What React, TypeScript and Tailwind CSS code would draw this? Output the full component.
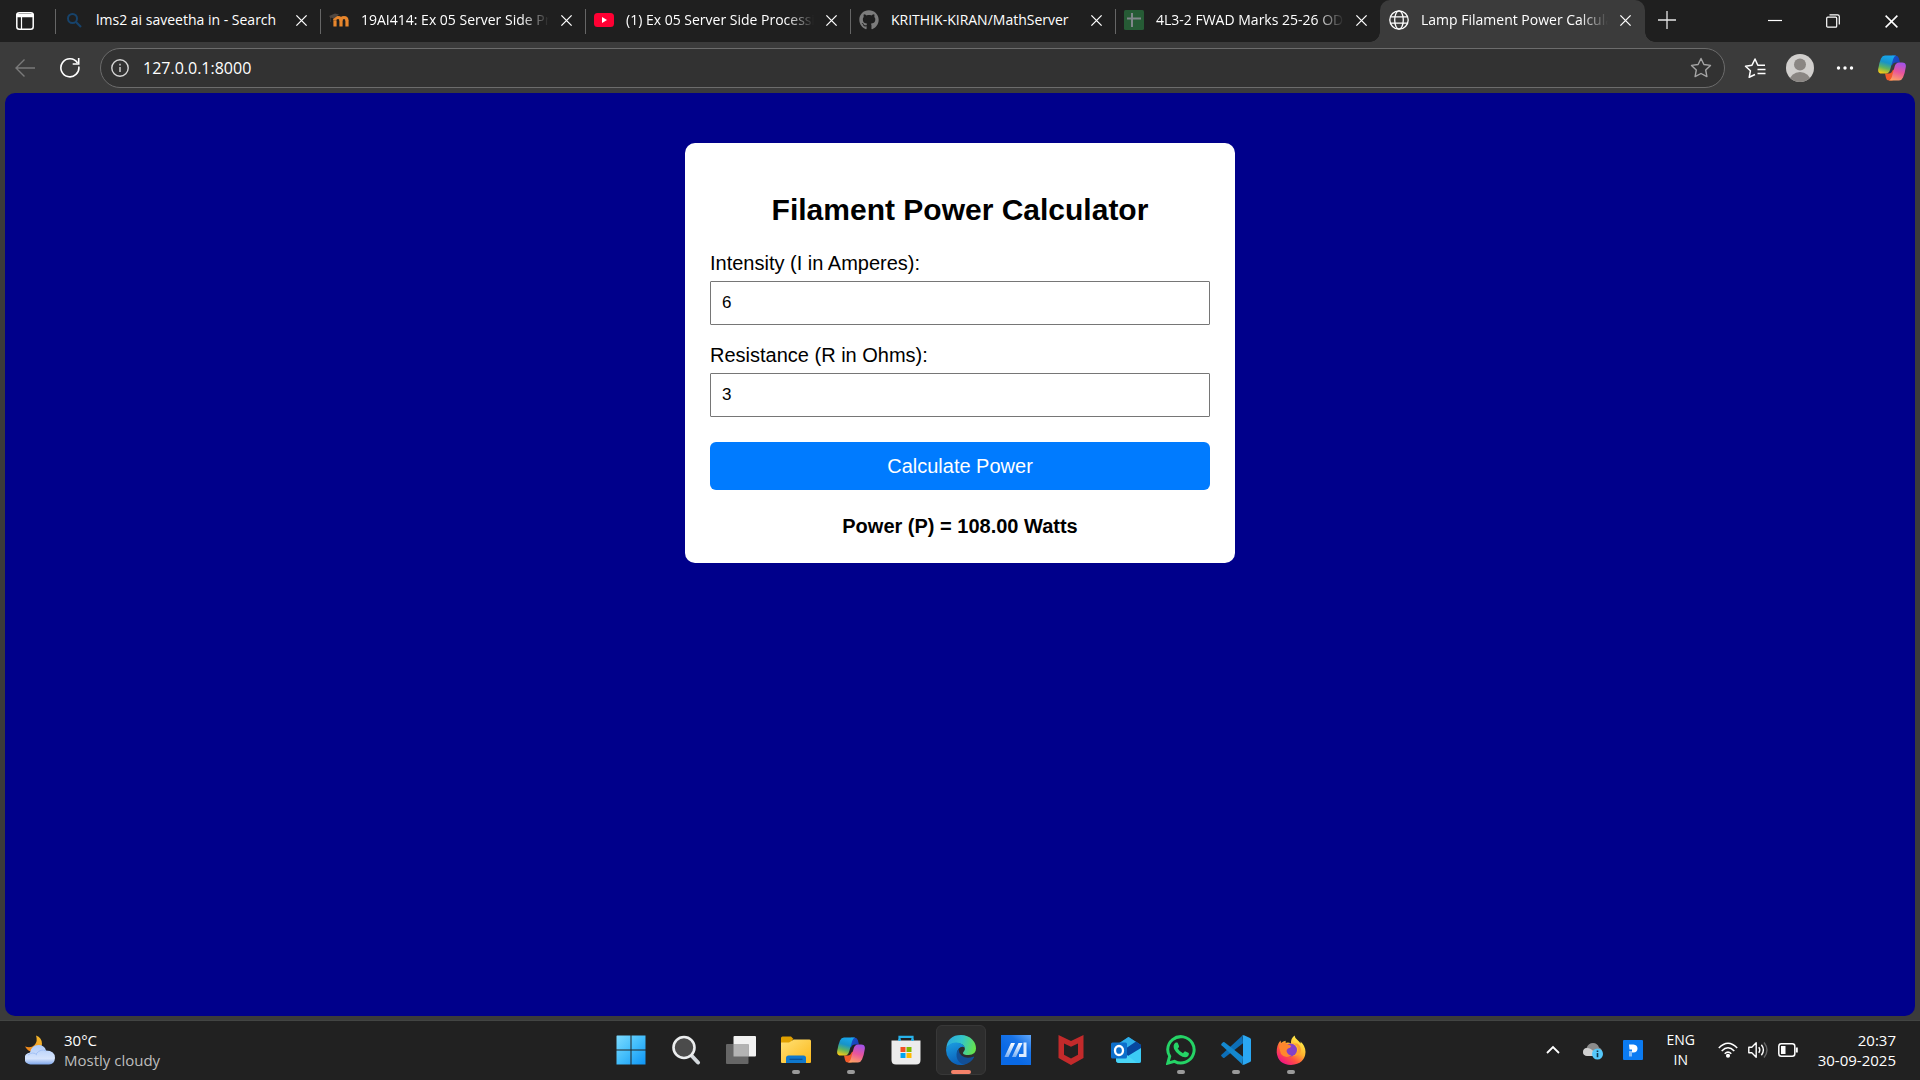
import { useState, type ReactNode } from 'react';
import { FaGithub } from 'react-icons/fa';

function SearchFavicon() {
  return (
    <svg viewBox="0 0 20 20" className="size-5" fill="none" stroke="#17436b" strokeWidth="2">
      <circle cx="8.5" cy="8.5" r="4.5" />
      <path d="M12 12l5 5" strokeWidth="2.2" />
    </svg>
  );
}

function MoodleFavicon() {
  return (
    <svg viewBox="0 0 20 20" className="size-5" fill="none" stroke="#e8862c" strokeWidth="3.2">
      <path d="M6 16.500V10.500M12 16.500V10.500M18 16.500V10.500" />
      <path d="M5.500 10.500Q6 7.500 9 7.500Q12 7.500 12 11Q12 7.500 15 7.500Q18 7.500 18 11" />
      <path d="M0 6L6 3.500L10 4.500L5 8.500Q3 7.500 1.500 8V12H1V7Z" fill="#4f4742" stroke="none" />
    </svg>
  );
}

function YoutubeFavicon() {
  return (
    <svg viewBox="0 0 20 20" className="size-5">
      <rect y="3" width="20" height="14" rx="3.500" fill="#ff0033" />
      <path d="M8 7l5 3-5 3z" fill="#fff" />
    </svg>
  );
}

function SheetFavicon() {
  return (
    <svg viewBox="0 0 20 20" className="size-5">
      <rect width="20" height="20" rx="1.500" fill="#265b35" />
      <path d="M8 3v14M3 8.500h14" stroke="#80868a" strokeWidth="2" />
    </svg>
  );
}

function GlobeIcon() {
  return (
    <svg viewBox="0 0 20 20" className="size-5" fill="none" stroke="#fff" strokeWidth="1.300">
      <circle cx="10" cy="10" r="9.200" />
      <ellipse cx="10" cy="10" rx="4.300" ry="9.200" />
      <path d="M1.500 6.800h17M1.500 13.200h17" />
    </svg>
  );
}

function Cross({ className }: { className: string }) {
  return (
    <svg viewBox="0 0 14 14" className={className} fill="none" stroke="currentColor" strokeWidth="1.400">
      <path d="M1.500 1.500l11 11M12.500 1.500l-11 11" />
    </svg>
  );
}

function CopilotIcon({ id }: { id: string }) {
  return (
    <svg viewBox="0 0 28 26" className="h-[26px] w-7">
      <defs>
        <linearGradient id={`${id}-a`} x1="0.600" y1="0" x2="0.300" y2="1">
          <stop offset="0" stopColor="#18a7ee" />
          <stop offset="0.400" stopColor="#1793c9" />
          <stop offset="0.700" stopColor="#61b45e" />
          <stop offset="1" stopColor="#f5c916" />
        </linearGradient>
        <linearGradient id={`${id}-b`} x1="0.600" y1="0" x2="0.300" y2="1">
          <stop offset="0" stopColor="#a452e6" />
          <stop offset="0.500" stopColor="#e9559b" />
          <stop offset="1" stopColor="#ffa265" />
        </linearGradient>
        <linearGradient id={`${id}-c`} x1="0" y1="0" x2="1" y2="0.500">
          <stop offset="0" stopColor="#1657cc" />
          <stop offset="1" stopColor="#1b3fb8" />
        </linearGradient>
      </defs>
      <path d="M14 .5h3.500q2.500 0 3.300 2.500L22 7.500h-4q-3 0-4 3L12 9z" fill={`url(#${id}-c)`} />
      <path d="M7 18.500h4q2.500 0 3.500-3l3-2-3 12h-3.500q-2.500 0-3-2.500z" fill="#f25a2a" />
      <path d="M7 .5h11q-2 .5-2.800 3.500l-3 10.500q-1.200 4-4.200 4H4q-4.500 0-3.800-4.500Q1 8 3 3.500 4.300.5 7 .5z" fill={`url(#${id}-a)`} />
      <path d="M21 25.500H11q2-.5 2.800-3.500l3-11q1.200-3.500 4.200-3.500h3q4.500 0 3.800 4.500-.8 6-2.800 10.500-1.300 3-4 3z" fill={`url(#${id}-b)`} />
    </svg>
  );
}

function WindowsIcon() {
  return (
    <svg viewBox="0 0 30 30" className="size-[30px]">
      <defs>
        <linearGradient id="win" x1="0" y1="0" x2="30" y2="30" gradientUnits="userSpaceOnUse">
          <stop offset="0" stopColor="#7fdcff" />
          <stop offset="0.500" stopColor="#42bdfb" />
          <stop offset="1" stopColor="#0c93f5" />
        </linearGradient>
      </defs>
      <path d="M1 .5h13.500v14H.5V1zM15.500 .5h14v14h-14zM.5 15.500h14v14H.5zM15.500 15.500h14v14h-14z" fill="url(#win)" />
    </svg>
  );
}

function SearchIcon() {
  return (
    <svg viewBox="0 0 30 30" className="size-[30px]" fill="none">
      <path d="M20 20l7 7.500" stroke="#d3d8dc" strokeWidth="4" strokeLinecap="round" />
      <circle cx="13" cy="12.500" r="10.500" fill="#4b4b4b" stroke="#eceeef" strokeWidth="2.600" />
    </svg>
  );
}

function TaskViewIcon() {
  return (
    <svg viewBox="0 0 30 30" className="size-[30px]">
      <rect x="7.500" y="1" width="22.500" height="20.500" rx="1" fill="#f2f2f2" />
      <rect x="0" y="9" width="22.500" height="20" rx="1" fill="#666" />
      <path d="M7.500 9h15v12.500h-15z" fill="#b3b3b3" />
    </svg>
  );
}

function FolderIcon() {
  return (
    <svg viewBox="0 0 30 30" className="size-[30px]">
      <defs>
        <linearGradient id="folder" x1="0" y1="0" x2="1" y2="1">
          <stop offset="0" stopColor="#ffe176" />
          <stop offset="1" stopColor="#fcb81a" />
        </linearGradient>
      </defs>
      <path d="M0 3q0-1.500 1.500-1.500H10l3 3h-1.500V10H0z" fill="#e0a000" />
      <path d="M0 7.500h8l5-3h15.500Q30 4.500 30 6v21q0 1-1 1H1q-1 0-1-1z" fill="url(#folder)" />
      <path d="M5 28v-5q0-2.500 2.500-2.500h15q2.500 0 2.500 2.500v5z" fill="#0f78cd" />
      <path d="M8.500 24.300h13" stroke="#084f93" strokeWidth="1.200" />
    </svg>
  );
}

function StoreIcon() {
  return (
    <svg viewBox="0 0 30 30" className="size-[30px]">
      <path d="M8.500 7V1.800h13V7" fill="none" stroke="#27b2ea" strokeWidth="2.200" />
      <path d="M.5 5.500h29V25q0 4.500-4.500 4.500H5Q.5 29.500.5 25z" fill="#ececec" />
      <path d="M8.500 6V4M21.500 6V4" stroke="#27b2ea" strokeWidth="2.200" />
      <path d="M9.500 12h5v5h-5z" fill="#f25022" />
      <path d="M15.500 12h5v5h-5z" fill="#7fba00" />
      <path d="M9.500 18h5v5h-5z" fill="#00a4ef" />
      <path d="M15.500 18h5v5h-5z" fill="#ffb900" />
    </svg>
  );
}

function EdgeIcon() {
  return (
    <svg viewBox="0 0 30 30" className="size-[30px]">
      <defs>
        <linearGradient id="edge-top" x1="0" y1="0.300" x2="1" y2="0.500">
          <stop offset="0" stopColor="#2aa9e0" />
          <stop offset="0.500" stopColor="#33c5c9" />
          <stop offset="1" stopColor="#66e34b" />
        </linearGradient>
        <linearGradient id="edge-left" x1="0" y1="0" x2="0.300" y2="1">
          <stop offset="0" stopColor="#1b9fe2" />
          <stop offset="1" stopColor="#0b62bb" />
        </linearGradient>
      </defs>
      <path d="M.2 13.500Q1.500 0 15 0q7 0 11.200 4.500Q30 8.500 30 13.500q0 6.500-7.500 6.500-5.500 0-5.500-2 0-.7 1-1.800 1.200-1.500.8-3.200Q18 8.500 10.500 8 4 8 .2 13.500z" fill="url(#edge-top)" />
      <path d="M.2 13.500Q3.500 7 10.500 7.500q6.500.5 8.300 5-3.300-2-6 1-2.800 3.500-1 8.500 2 5 7 7.500-2 .5-4 .5Q7.500 30 3 24-.5 19.500.2 13.500z" fill="url(#edge-left)" />
      <path d="M12.500 14q-3.500 5-1 10.500 2 4 6.500 5.200 6.500-1.200 10-7.200.5-1.200-.7-.8-7 2.500-11.800-1.200Q12.800 18 12.500 14z" fill="#124f96" />
    </svg>
  );
}

function MyAsusIcon() {
  return (
    <svg viewBox="0 0 30 30" className="size-[30px]">
      <defs>
        <linearGradient id="asus" x1="1" y1="0" x2="0.400" y2="0.700">
          <stop offset="0" stopColor="#62a8fa" />
          <stop offset="0.500" stopColor="#1974e8" />
          <stop offset="1" stopColor="#0969e5" />
        </linearGradient>
        <linearGradient id="asus-mark" x1="0" y1="1" x2="0" y2="0">
          <stop offset="0" stopColor="#79b0f4" />
          <stop offset="1" stopColor="#fff" />
        </linearGradient>
      </defs>
      <path d="M0 0h30v30H0z" fill="url(#asus)" />
      <path d="M3.500 22L10 8h4L7.500 22zM11 22l6.500-14h4L15 22z" fill="url(#asus-mark)" />
      <path d="M22.500 7.500h3V22h-3zM18 19h5v3h-5z" fill="#dcebff" />
    </svg>
  );
}

function McAfeeIcon() {
  return (
    <svg viewBox="0 0 30 30" className="size-[30px]">
      <path d="M2.500 0L15 6 27.500 0v23L15 30 2.500 23zM8 8.500v11.300l7 3.700 7-3.700V8.500l-7 3.200z" fill="#c22a2b" fillRule="evenodd" />
    </svg>
  );
}

function OutlookIcon() {
  return (
    <svg viewBox="0 0 30 30" className="size-[30px]">
      <path d="M5 10L17.500 2 30 10v16q0 2-2 2H8q-3 0-3-3z" fill="#1c98dd" />
      <path d="M9 8l8.500-6L25 7 11 16z" fill="#2eaee9" />
      <path d="M14 14l11-7.500 5 3.500v4L16 22z" fill="#07479f" />
      <path d="M30 13v13q0 2-2 2H8l4-4z" fill="#3ccbf5" />
      <path d="M5 23l11-3 10 8H8q-3 0-3-3z" fill="#4ad5f5" />
      <rect y="7.500" width="16" height="16" rx="1.500" fill="#0c6fcc" />
      <ellipse cx="8" cy="15.500" rx="4" ry="4.500" fill="none" stroke="#fff" strokeWidth="2.300" />
    </svg>
  );
}

function WhatsAppIcon() {
  return (
    <svg viewBox="0 0 30 30" className="size-[30px]" fill="none">
      <path d="M1.800 28.200l1.900-7Q1.700 18 1.700 14.500A13.200 13.200 0 1 1 8.500 26.400z" stroke="#25d366" strokeWidth="3" />
      <path d="M9.300 7.800q.8-.5 1.800-.2.600.2.900 1l1 2.500q.2.700-.3 1.300l-1 1.200q1.900 3.400 5.300 4.700l1.300-1.600q.5-.6 1.200-.3l2.800 1.400q.7.400.6 1.200-.3 2.800-3.500 3.300-2.400.2-6-2.200-3.600-2.700-5.300-6.200-1.400-3.800 1.200-6.100z" fill="#25d366" />
    </svg>
  );
}

function VsCodeIcon() {
  return (
    <svg viewBox="0 0 30 30" className="size-[30px]">
      <path d="M22 8.300L3.500 22.800q-.8.600-1.500 0L.5 21.300q-.7-.8 0-1.500L21.500.5z" fill="#0d6fb8" />
      <path d="M22 21.700L3.500 7.200q-.8-.6-1.500 0L.5 8.700q-.7.800 0 1.500l21 19.300z" fill="#1488cf" />
      <path d="M22 .3q.5-.3 1 0L29 3q1 .5 1 1.500v21q0 1-1 1.500l-6 2.700q-1.200.5-2-.7 1 .5 1-1V2Q22 .8 21 1z" fill="#2aa7f2" />
    </svg>
  );
}

function FirefoxIcon() {
  return (
    <svg viewBox="0 0 30 30" className="size-[30px]">
      <defs>
        <linearGradient id="fox" x1="0.800" y1="0.100" x2="0.200" y2="0.900">
          <stop offset="0" stopColor="#fff14a" />
          <stop offset="0.400" stopColor="#ffb02e" />
          <stop offset="0.700" stopColor="#ff5340" />
          <stop offset="1" stopColor="#f0197e" />
        </linearGradient>
      </defs>
      <path d="M18.500.5q.5 3 3 4.500 2 1.500 3 3.500.3-1 0-2 5 4.500 5 10.500Q29 29 15 30 2 29.500.7 17.500.5 10 4.500 5.500L5 8q2-2 5-2.300-1 1.500-.5 2.300 3-1 5.500.5-.5-5 3.500-8z" fill="url(#fox)" />
      <circle cx="14.500" cy="15" r="6.500" fill="#8441c7" />
      <path d="M3 12q2-5 7-4.500 0 1.500 3.500 2.500 2 .5 1.500 1.500-.5 1.300-3 2-1.500 1-1.500 2.500 1 4 5 4.500Q9 24 5 19z" fill="#ff872d" />
      <path d="M16 8.500q6 1 6 7-1 4.500-5.500 5 5 1 8-3 1.500-6-3-9z" fill="#ffa12e" />
    </svg>
  );
}

function WeatherIcon() {
  return (
    <svg viewBox="0 0 30 30" className="size-[30px]">
      <defs>
        <linearGradient id="moon" x1="1" y1="0" x2="0" y2="1">
          <stop offset="0" stopColor="#f5c02e" />
          <stop offset="1" stopColor="#ef7d18" />
        </linearGradient>
        <linearGradient id="cloud" x1="0" y1="0" x2="0" y2="1">
          <stop offset="0" stopColor="#aecbf9" />
          <stop offset="0.700" stopColor="#d6e4fc" />
          <stop offset="1" stopColor="#7ea6ea" />
        </linearGradient>
      </defs>
      <path d="M11 .5q6 2 6 8.500-1 8-9 8-5-.5-8-5.500 6 2 9.500-1.500T11 .5z" fill="url(#moon)" />
      <path d="M6 29.500a6 6 0 0 1-1-12q1.500-7.500 8.500-7.500 6 0 7.500 5.500 9 0 9 7.500-.5 6-6 6.500z" fill="url(#cloud)" />
      <path d="M3 20q5-4 9 0M11 19q5-6 10-3" stroke="#a3c1f5" strokeWidth="1" fill="none" />
    </svg>
  );
}

type TabInfo = { title: string; icon: ReactNode; fade?: boolean };

const tabs: TabInfo[] = [
  { title: 'lms2 ai saveetha in - Search', icon: <SearchFavicon /> },
  { title: '19AI414: Ex 05 Server Side Processing', icon: <MoodleFavicon />, fade: true },
  { title: '(1) Ex 05 Server Side Processing', icon: <YoutubeFavicon />, fade: true },
  { title: 'KRITHIK-KIRAN/MathServer', icon: <FaGithub className="size-5 text-[#7c7c7c]" /> },
  { title: '4L3-2 FWAD Marks 25-26 ODD', icon: <SheetFavicon />, fade: true },
];

function TabBody({ title, icon, fade }: TabInfo) {
  return (
    <>
      <button className="flex min-w-0 flex-1 items-center gap-3 text-left">
        <span className="shrink-0">{icon}</span>
        <span
          className={`min-w-0 flex-1 overflow-hidden whitespace-nowrap text-sm text-white ${
            fade ? '[mask-image:linear-gradient(to_right,#000_calc(100%-28px),transparent)]' : ''
          }`}
        >
          {title}
        </span>
      </button>
      <button aria-label={`Close ${title}`} className="flex size-6 items-center justify-center text-white">
        <Cross className="size-[13px]" />
      </button>
    </>
  );
}

function TabStrip() {
  return (
    <header className="flex h-[42px] items-stretch bg-[#1f1f1f]">
      <button aria-label="Tab actions" className="flex w-[55px] shrink-0 items-center pl-4">
        <svg viewBox="0 0 18 18" className="size-[18px]" fill="none" stroke="#fff" strokeWidth="1.500">
          <rect x="0.800" y="0.800" width="16.400" height="16.400" rx="2.500" />
          <path d="M1 2.500h16v2H1z" fill="#fff" />
          <path d="M5.500 5v12" strokeWidth="1.200" />
        </svg>
      </button>
      <nav aria-label="Tabs" className="flex min-w-0">
        {tabs.map((tab) => (
          <div key={tab.title} className="flex w-[265px] min-w-0 items-center pb-[2px]">
            <div className="mt-[2px] h-[25px] w-px shrink-0 bg-[#666]" />
            <div className="flex min-w-0 flex-1 items-center gap-[5px] pl-2 pr-[7px]">
              <TabBody {...tab} />
            </div>
          </div>
        ))}
        <div className="relative flex w-[265px] min-w-0 items-center gap-[5px] rounded-t-[10px] bg-[#3b3b3b] pb-[2px] pl-[9px] pr-[8px]">
          <span className="absolute bottom-0 right-full size-[10px] bg-[radial-gradient(circle_at_0_0,#1f1f1f_9.5px,#3b3b3b_10px)]" />
          <TabBody title="Lamp Filament Power Calculator" icon={<GlobeIcon />} fade />
          <span className="absolute bottom-0 left-full size-[10px] bg-[radial-gradient(circle_at_100%_0,#1f1f1f_9.5px,#3b3b3b_10px)]" />
        </div>
      </nav>
      <button aria-label="New tab" className="flex w-11 shrink-0 items-center justify-center pb-[2px]">
        <svg viewBox="0 0 18 18" className="size-[18px]" stroke="#e6e6e6" strokeWidth="1.300">
          <path d="M9 0v18M0 9h18" />
        </svg>
      </button>
      <div className="ml-auto flex shrink-0 text-white">
        <button aria-label="Minimize" className="flex w-[58px] items-center justify-center">
          <svg viewBox="0 0 14 14" className="size-[14px]" stroke="currentColor" strokeWidth="1.200">
            <path d="M0 6.500h14" />
          </svg>
        </button>
        <button aria-label="Restore" className="flex w-[58px] items-center justify-center">
          <svg viewBox="0 0 14 14" className="size-[14px]" fill="none" stroke="currentColor" strokeWidth="1.200">
            <rect x="0.700" y="3.200" width="10" height="10" rx="1" />
            <path d="M3.500 .8h8q1.800 0 1.800 1.800v8" />
          </svg>
        </button>
        <button aria-label="Close window" className="flex w-[58px] items-center justify-center">
          <Cross className="size-[15px]" />
        </button>
      </div>
    </header>
  );
}

function Toolbar() {
  return (
    <div className="flex h-[51px] items-center bg-[#3b3b3b] pr-[14px]">
      <button aria-label="Back" className="flex w-[50px] items-center justify-center">
        <svg viewBox="0 0 20 20" className="size-5" fill="none" stroke="#7a7a7a" strokeWidth="1.400">
          <path d="M20 10H1M9.500 1.500L1 10l8.500 8.500" />
        </svg>
      </button>
      <button aria-label="Refresh" className="flex w-10 items-center justify-center">
        <svg viewBox="0 0 20 20" className="size-5" fill="none" stroke="#fff" strokeWidth="1.600">
          <path d="M18.800 8.500A9 9 0 1 1 17.500 5" />
          <path d="M18.700 0v6h-6" />
        </svg>
      </button>
      <div className="ml-[10px] flex h-10 flex-1 items-center rounded-full border border-[#6c6c6c] bg-[#323232] pl-[10px] pr-3">
        <button aria-label="Site information">
          <svg viewBox="0 0 18 18" className="size-[18px]" fill="none" stroke="#d6d6d6" strokeWidth="1.400">
            <circle cx="9" cy="9" r="8.200" />
            <path d="M9 8v5M9 4.800v1.600" />
          </svg>
        </button>
        <input
          aria-label="Address"
          defaultValue="127.0.0.1:8000"
          className="ml-[14px] min-w-0 flex-1 bg-transparent text-base text-white outline-none"
        />
        <button aria-label="Add to favorites">
          <svg viewBox="0 0 22 22" className="size-[22px]" fill="none" stroke="#a5a5a5" strokeWidth="1.400" strokeLinejoin="round">
            <path d="M11 1.500l2.900 6 6.600.9-4.800 4.600 1.200 6.600L11 16.500l-5.900 3.100L6.300 13 1.500 8.400l6.600-.9z" />
          </svg>
        </button>
      </div>
      <div className="ml-[7px] flex items-center">
        <button aria-label="Favorites" className="flex w-[45px] items-center justify-center">
          <svg viewBox="0 0 22 22" className="size-[22px]" fill="none" stroke="#fff" strokeWidth="1.500" strokeLinejoin="round">
            <path d="M11 17.500l-5.800 2.800 1.200-6.500L1.500 9.200l6.500-1 3-6.200 2.800 6.200H21" />
            <path d="M13.500 12.500H21.500M13.500 16.500H21.500" />
          </svg>
        </button>
        <button aria-label="Profile" className="flex w-[45px] items-center justify-center">
          <svg viewBox="0 0 28 28" className="size-7">
            <clipPath id="avatar">
              <circle cx="14" cy="14" r="14" />
            </clipPath>
            <g clipPath="url(#avatar)">
              <path d="M0 0h28v28H0z" fill="#d1cfcd" />
              <circle cx="14" cy="10.500" r="6" fill="#8a8683" />
              <ellipse cx="14" cy="27" rx="10.500" ry="9" fill="#8a8683" />
            </g>
          </svg>
        </button>
        <button aria-label="Settings and more" className="flex w-[45px] items-center justify-center">
          <svg viewBox="0 0 18 18" className="size-[18px]" fill="#fff">
            <circle cx="2.500" cy="9" r="1.700" />
            <circle cx="9" cy="9" r="1.700" />
            <circle cx="15.500" cy="9" r="1.700" />
          </svg>
        </button>
        <button aria-label="Copilot" className="ml-[11px]">
          <CopilotIcon id="bar" />
        </button>
      </div>
    </div>
  );
}

function Calculator() {
  const [intensity, setIntensity] = useState('6');
  const [resistance, setResistance] = useState('3');
  const [power, setPower] = useState(108);
  const fieldClass =
    'mt-[6px] block h-11 w-full rounded-[1px] border border-[#767676] bg-white px-[11px] text-[17px] text-black outline-none';
  return (
    <form
      className="mx-auto mt-[50px] w-[550px] rounded-[10px] bg-white px-[25px] pb-[25px] pt-[49px] font-['Liberation_Sans',Arial,sans-serif] text-xl leading-6 text-black"
      onSubmit={(event) => {
        event.preventDefault();
        setPower(Number(intensity) ** 2 * Number(resistance));
      }}
    >
      <h2 className="text-center text-3xl font-bold">Filament Power Calculator</h2>
      <label htmlFor="intensity" className="mt-[23px] block">
        Intensity (I in Amperes):
      </label>
      <input id="intensity" value={intensity} onChange={(e) => setIntensity(e.target.value)} className={fieldClass} />
      <label htmlFor="resistance" className="mt-[18px] block">
        Resistance (R in Ohms):
      </label>
      <input id="resistance" value={resistance} onChange={(e) => setResistance(e.target.value)} className={fieldClass} />
      <button type="submit" className="mt-[25px] block h-12 w-full rounded-md bg-[#007bff] text-white">
        Calculate Power
      </button>
      <p className="mt-6 text-center font-bold">Power (P) = {power.toFixed(2)} Watts</p>
    </form>
  );
}

type TaskApp = { name: string; icon: ReactNode; state?: 'open' | 'active' };

const apps: TaskApp[] = [
  { name: 'Start', icon: <WindowsIcon /> },
  { name: 'Search', icon: <SearchIcon /> },
  { name: 'Task View', icon: <TaskViewIcon /> },
  { name: 'File Explorer', icon: <FolderIcon />, state: 'open' },
  { name: 'Copilot', icon: <CopilotIcon id="task" />, state: 'open' },
  { name: 'Store', icon: <StoreIcon /> },
  { name: 'Edge', icon: <EdgeIcon />, state: 'active' },
  { name: 'MyASUS', icon: <MyAsusIcon /> },
  { name: 'McAfee', icon: <McAfeeIcon /> },
  { name: 'Outlook', icon: <OutlookIcon /> },
  { name: 'WhatsApp', icon: <WhatsAppIcon />, state: 'open' },
  { name: 'Visual Studio Code', icon: <VsCodeIcon />, state: 'open' },
  { name: 'Firefox', icon: <FirefoxIcon />, state: 'open' },
];

function TaskButton({ name, icon, state }: TaskApp) {
  return (
    <button
      aria-label={name}
      className={`relative flex size-[50px] items-center justify-center rounded-md border ${
        state === 'active' ? 'border-[#383838] bg-[#2d2d2d]' : 'border-transparent'
      }`}
    >
      {icon}
      {state === 'open' && <span className="absolute bottom-0 h-1 w-2 rounded-full bg-[#9a9a9a]" />}
      {state === 'active' && <span className="absolute bottom-0 h-1 w-5 rounded-full bg-[#f4826a]" />}
    </button>
  );
}

function Taskbar() {
  return (
    <footer className="grid h-[60px] grid-cols-[1fr_auto_1fr] items-center border-t border-[#434543] bg-[#212121] pb-px text-[15px] leading-5 text-white">
      <button className="flex items-center gap-[9px] pl-[25px] text-left">
        <WeatherIcon />
        <span>
          <span className="block">30°C</span>
          <span className="block text-[#bdbdbd]">Mostly cloudy</span>
        </span>
      </button>
      <div className="flex gap-[5px] pl-[2px]">
        {apps.map((app) => (
          <TaskButton key={app.name} {...app} />
        ))}
      </div>
      <div className="flex items-center justify-end pr-6">
        <button aria-label="Show hidden icons" className="flex w-10 items-center justify-center">
          <svg viewBox="0 0 14 10" className="h-[10px] w-[14px]" fill="none" stroke="#fff" strokeWidth="1.800">
            <path d="M1 8l6-6 6 6" />
          </svg>
        </button>
        <button aria-label="OneDrive" className="flex w-10 items-center justify-center">
          <svg viewBox="0 0 20 20" className="size-5">
            <path d="M4 16q-4-.5-4-4t3.500-4Q5.500 3 10 3t6 4.500q3 1 3 4.500t-4 4z" fill="#8c8c8c" />
            <path d="M0 12q.5-4 4-4 4 0 7 4v4H4q-4-.5-4-4z" fill="#d0d0d0" />
            <circle cx="14.500" cy="14" r="5.500" fill="#55c8fb" />
            <path d="M14.500 13v4.200M14.500 10.400v1.700" stroke="#10384d" strokeWidth="1.600" />
          </svg>
        </button>
        <button aria-label="PC assistant" className="flex w-10 items-center justify-center">
          <svg viewBox="0 0 20 20" className="size-5">
            <rect width="20" height="20" rx="1" fill="#0b7bf2" />
            <path d="M6 4.500h4.500q4 .5 4 4.300-.2 3.500-4 3.700H9V9.500H6.500z" fill="#fff" />
            <path d="M6 11h3v5.500H6z" fill="#86bdf8" />
          </svg>
        </button>
        <button aria-label="Input language" className="w-14 text-center text-sm leading-5">
          <span className="block">ENG</span>
          <span className="block">IN</span>
        </button>
        <button aria-label="Network, volume and battery" className="ml-[9px] flex items-center gap-[10px]">
          <svg viewBox="0 0 20 16" className="h-4 w-5" fill="none" stroke="#fff" strokeWidth="1.500">
            <path d="M.8 6Q10-3.500 19.200 6M3.700 9Q10 2.500 16.300 9M6.700 11.800Q10 8.500 13.300 11.800" />
            <circle cx="10" cy="13.800" r="1.300" fill="#fff" />
          </svg>
          <svg viewBox="0 0 20 18" className="h-[18px] w-5" fill="none" strokeWidth="1.400">
            <path d="M.8 6.200h3l4.400-4.400v14.400l-4.400-4.400h-3z" stroke="#fff" strokeLinejoin="round" />
            <path d="M10.800 6.200q2 2.800 0 5.600M13.400 3.800q4 5.200 0 10.400" stroke="#fff" />
            <path d="M16 1.500q6 7.500 0 15" stroke="#666" />
          </svg>
          <svg viewBox="0 0 20 14" className="h-[14px] w-5" fill="none" stroke="#fff" strokeWidth="1.500">
            <rect x="0.800" y="0.800" width="16" height="12.400" rx="2.500" />
            <path d="M3 3h4.500v8H3z" fill="#fff" stroke="none" />
            <path d="M18.800 4.500v5" strokeWidth="2" />
          </svg>
        </button>
        <button className="ml-5 text-right">
          <span className="block">20:37</span>
          <span className="block">30-09-2025</span>
        </button>
      </div>
    </footer>
  );
}

export default function App() {
  return (
    <div className="flex min-h-screen flex-col bg-[#3b3b3b] font-['Open_Sans','Noto_Sans',sans-serif]">
      <TabStrip />
      <Toolbar />
      <main className="mx-[5px] mb-1 flex-1 overflow-hidden rounded-[10px] bg-[#00008b]">
        <Calculator />
      </main>
      <Taskbar />
    </div>
  );
}
